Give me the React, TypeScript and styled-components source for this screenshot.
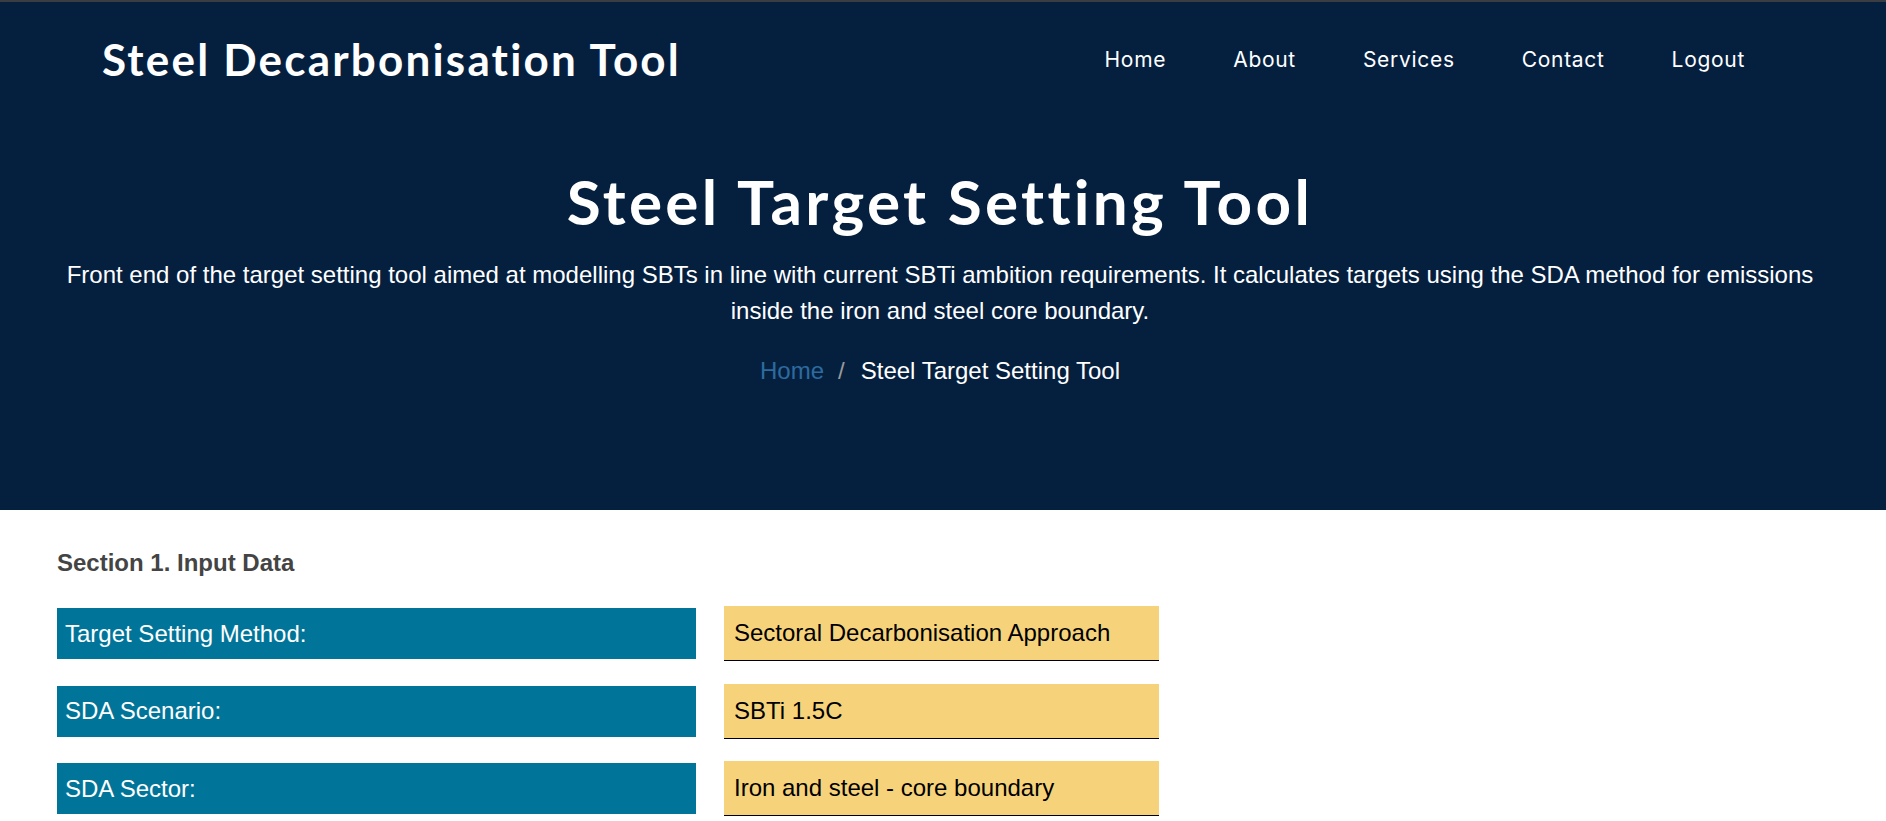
import React from "react";
import styled, { createGlobalStyle } from "styled-components";

const GlobalStyle = createGlobalStyle`
  * { box-sizing: border-box; }
  html, body { margin: 0; padding: 0; background: #ffffff; }
  body { font-family: "Liberation Sans", Arial, sans-serif; }
`;

const Page = styled.div`
  width: 100%;
  min-height: 821px;
  background: #ffffff;
`;

const Hero = styled.header`
  background: #05203f;
  border-top: 2px solid #3a3d42;
  height: 510px;
  display: flex;
  flex-direction: column;
`;

const NavBar = styled.nav`
  height: 114px;
  display: flex;
  align-items: center;
  justify-content: space-between;
  padding: 0 141px 0 102px;
`;

const Brand = styled.a`
  font-family: "Lato", "Open Sans", sans-serif;
  font-weight: 700;
  font-size: 44px;
  color: #ffffff;
  text-decoration: none;
  letter-spacing: 2.2px;
  font-variant-ligatures: none;
`;

const NavList = styled.ul`
  display: flex;
  align-items: center;
  gap: 67px;
  list-style: none;
  margin: 0;
  padding: 0;
`;

const NavLink = styled.a`
  font-family: "Inter", "Roboto", sans-serif;
  font-weight: 400;
  font-size: 21px;
  letter-spacing: 0.7px;
  color: #ffffff;
  text-decoration: none;
`;

const HeroBody = styled.div`
  display: flex;
  flex-direction: column;
  align-items: center;
  padding: 0 46px 0 40px;
  text-align: center;
`;

const HeroTitle = styled.h1`
  font-family: "Lato", "Open Sans", sans-serif;
  font-weight: 700;
  font-size: 62px;
  line-height: 72px;
  letter-spacing: 3.3px;
  font-variant-ligatures: none;
  color: #ffffff;
  margin: 49px 0 0;
`;

const HeroText = styled.p`
  font-family: "Liberation Sans", Arial, sans-serif;
  font-size: 24px;
  line-height: 36px;
  color: #ffffff;
  margin: 20px 0 0;
`;

const Crumbs = styled.ol`
  display: flex;
  list-style: none;
  margin: 24px 0 0;
  padding: 0;
  font-family: "Liberation Sans", Arial, sans-serif;
  font-size: 24px;
  line-height: 36px;
`;

const CrumbLink = styled.a`
  color: #2d6b9f;
  text-decoration: none;
`;

const CrumbSep = styled.span`
  color: #9a9a9a;
  margin: 0 16px 0 14px;
`;

const CrumbCurrent = styled.span`
  color: #ffffff;
`;

const Content = styled.main`
  padding: 35px 57px 0;
`;

const SectionTitle = styled.h2`
  font-family: "Liberation Sans", Arial, sans-serif;
  font-weight: 700;
  font-size: 24px;
  line-height: 36px;
  color: #444444;
  margin: 0 0 25px;
`;

const Rows = styled.div`
  display: flex;
  flex-direction: column;
  gap: 22.5px;
`;

const Row = styled.div`
  display: flex;
  align-items: center;
  gap: 28px;
`;

const Label = styled.div`
  width: 639px;
  height: 51px;
  background: #017599;
  color: #ffffff;
  font-family: "Liberation Sans", Arial, sans-serif;
  font-size: 24px;
  display: flex;
  align-items: center;
  padding-left: 8px;
`;

const Value = styled.div`
  width: 435px;
  height: 55px;
  background: #f6d37b;
  border-bottom: 1px solid #000000;
  color: #000000;
  font-family: "Liberation Sans", Arial, sans-serif;
  font-size: 24px;
  display: flex;
  align-items: center;
  padding-left: 10px;
`;

const navItems = ["Home", "About", "Services", "Contact", "Logout"];

const rows = [
  { label: "Target Setting Method:", value: "Sectoral Decarbonisation Approach" },
  { label: "SDA Scenario:", value: "SBTi 1.5C" },
  { label: "SDA Sector:", value: "Iron and steel - core boundary" },
];

export default function App() {
  return (
    <Page>
      <GlobalStyle />
      <Hero>
        <NavBar>
          <Brand href="#">Steel Decarbonisation Tool</Brand>
          <NavList>
            {navItems.map((n) => (
              <li key={n}>
                <NavLink href="#">{n}</NavLink>
              </li>
            ))}
          </NavList>
        </NavBar>
        <HeroBody>
          <HeroTitle>Steel Target Setting Tool</HeroTitle>
          <HeroText>
            Front end of the target setting tool aimed at modelling SBTs in line with current SBTi ambition
            requirements. It calculates targets using the SDA method for emissions inside the iron and steel core
            boundary.
          </HeroText>
          <Crumbs>
            <li>
              <CrumbLink href="#">Home</CrumbLink>
            </li>
            <li>
              <CrumbSep>/</CrumbSep>
              <CrumbCurrent>Steel Target Setting Tool</CrumbCurrent>
            </li>
          </Crumbs>
        </HeroBody>
      </Hero>
      <Content>
        <SectionTitle>Section 1. Input Data</SectionTitle>
        <Rows>
          {rows.map((r) => (
            <Row key={r.label}>
              <Label>{r.label}</Label>
              <Value>{r.value}</Value>
            </Row>
          ))}
        </Rows>
      </Content>
    </Page>
  );
}
